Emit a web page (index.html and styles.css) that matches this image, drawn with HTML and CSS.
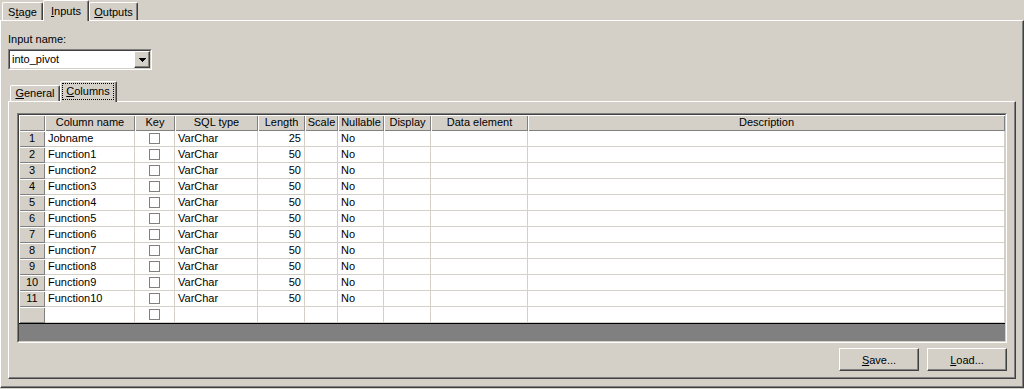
FILE: index.html
```html
<!DOCTYPE html>
<html lang="en">
  <head>
    <meta charset="UTF-8" />
    <meta name="viewport" content="width=device-width, initial-scale=1.0" />
    <title>Stage Properties</title>
    <link rel="stylesheet" href="styles.css">
  </head>
  <body>
    <div class="tabs outer-tabs">
      <div class="tab tab-stage">S<u>t</u>age</div>
      <div class="tab tab-active tab-inputs"><u>I</u>nputs</div>
      <div class="tab tab-outputs"><u>O</u>utputs</div>
    </div>

    <div class="panel outer-panel">
      <div class="field-label">Input name:</div>
      <div class="combo">
        <div class="combo-field">
          <div class="combo-text">into_pivot</div>
          <div class="combo-button">
            <svg width="7" height="4" viewBox="0 0 7 4" shape-rendering="crispEdges">
              <rect x="0" y="0" width="7" height="1" fill="#000" />
              <rect x="1" y="1" width="5" height="1" fill="#000" />
              <rect x="2" y="2" width="3" height="1" fill="#000" />
              <rect x="3" y="3" width="1" height="1" fill="#000" />
            </svg>
          </div>
        </div>
      </div>

      <div class="tabs inner-tabs">
        <div class="tab tab-general"><u>G</u>eneral</div>
        <div class="tab tab-active tab-columns"><span class="focus"><u>C</u>olumns</span></div>
      </div>

      <div class="panel inner-panel">
        <div class="grid">
          <div class="grid-inner">
            <div class="row">
              <div class="hd"></div>
              <div class="hd">Column name</div>
              <div class="hd">Key</div>
              <div class="hd">SQL type</div>
              <div class="hd">Length</div>
              <div class="hd">Scale</div>
              <div class="hd">Nullable</div>
              <div class="hd">Display</div>
              <div class="hd">Data element</div>
              <div class="hd">Description</div>
            </div>
            <div class="row">
              <div class="num">1</div><div class="cell">Jobname</div><div class="cell key"><span class="check"></span></div><div class="cell">VarChar</div><div class="cell len">25</div><div class="cell"></div><div class="cell">No</div><div class="cell"></div><div class="cell"></div><div class="cell"></div>
            </div>
            <div class="row">
              <div class="num">2</div><div class="cell">Function1</div><div class="cell key"><span class="check"></span></div><div class="cell">VarChar</div><div class="cell len">50</div><div class="cell"></div><div class="cell">No</div><div class="cell"></div><div class="cell"></div><div class="cell"></div>
            </div>
            <div class="row">
              <div class="num">3</div><div class="cell">Function2</div><div class="cell key"><span class="check"></span></div><div class="cell">VarChar</div><div class="cell len">50</div><div class="cell"></div><div class="cell">No</div><div class="cell"></div><div class="cell"></div><div class="cell"></div>
            </div>
            <div class="row">
              <div class="num">4</div><div class="cell">Function3</div><div class="cell key"><span class="check"></span></div><div class="cell">VarChar</div><div class="cell len">50</div><div class="cell"></div><div class="cell">No</div><div class="cell"></div><div class="cell"></div><div class="cell"></div>
            </div>
            <div class="row">
              <div class="num">5</div><div class="cell">Function4</div><div class="cell key"><span class="check"></span></div><div class="cell">VarChar</div><div class="cell len">50</div><div class="cell"></div><div class="cell">No</div><div class="cell"></div><div class="cell"></div><div class="cell"></div>
            </div>
            <div class="row">
              <div class="num">6</div><div class="cell">Function5</div><div class="cell key"><span class="check"></span></div><div class="cell">VarChar</div><div class="cell len">50</div><div class="cell"></div><div class="cell">No</div><div class="cell"></div><div class="cell"></div><div class="cell"></div>
            </div>
            <div class="row">
              <div class="num">7</div><div class="cell">Function6</div><div class="cell key"><span class="check"></span></div><div class="cell">VarChar</div><div class="cell len">50</div><div class="cell"></div><div class="cell">No</div><div class="cell"></div><div class="cell"></div><div class="cell"></div>
            </div>
            <div class="row">
              <div class="num">8</div><div class="cell">Function7</div><div class="cell key"><span class="check"></span></div><div class="cell">VarChar</div><div class="cell len">50</div><div class="cell"></div><div class="cell">No</div><div class="cell"></div><div class="cell"></div><div class="cell"></div>
            </div>
            <div class="row">
              <div class="num">9</div><div class="cell">Function8</div><div class="cell key"><span class="check"></span></div><div class="cell">VarChar</div><div class="cell len">50</div><div class="cell"></div><div class="cell">No</div><div class="cell"></div><div class="cell"></div><div class="cell"></div>
            </div>
            <div class="row">
              <div class="num">10</div><div class="cell">Function9</div><div class="cell key"><span class="check"></span></div><div class="cell">VarChar</div><div class="cell len">50</div><div class="cell"></div><div class="cell">No</div><div class="cell"></div><div class="cell"></div><div class="cell"></div>
            </div>
            <div class="row">
              <div class="num">11</div><div class="cell">Function10</div><div class="cell key"><span class="check"></span></div><div class="cell">VarChar</div><div class="cell len">50</div><div class="cell"></div><div class="cell">No</div><div class="cell"></div><div class="cell"></div><div class="cell"></div>
            </div>
            <div class="row">
              <div class="num"></div><div class="cell"></div><div class="cell key"><span class="check"></span></div><div class="cell"></div><div class="cell"></div><div class="cell"></div><div class="cell"></div><div class="cell"></div><div class="cell"></div><div class="cell"></div>
            </div>
            <div class="grid-fill"></div>
          </div>
        </div>

        <div class="buttons">
          <button class="btn"><u>S</u>ave...</button>
          <button class="btn"><u>L</u>oad...</button>
        </div>
      </div>
    </div>
  </body>
</html>
```

FILE: styles.css
```css
* {
  box-sizing: border-box;
}

body {
  margin: 0;
  width: 1024px;
  height: 389px;
  overflow: hidden;
  background-color: #d4d0c8;
  font-family: "Liberation Sans", Arial, sans-serif;
  font-size: 11px;
  color: #000;
}

u {
  text-decoration: underline;
  text-underline-offset: 1px;
}

/* tab strips */

.tabs {
  display: flex;
  align-items: flex-end;
  padding-left: 2px;
}

.outer-tabs {
  height: 20px;
}

.inner-tabs {
  height: 21px;
  margin-top: 10px;
}

.tab {
  height: 18px;
  padding-top: 2px;
  border-top: 1px solid #fff;
  border-left: 1px solid #fff;
  border-right: 1px solid #404040;
  border-radius: 2px 2px 0 0;
  box-shadow: inset -1px 0 #808080;
  text-align: center;
  line-height: 14px;
}

.tab-active {
  position: relative;
  z-index: 1;
  height: 21px;
  margin-bottom: -1px;
  background-color: #d4d0c8;
  line-height: 16px;
}

.tab-stage {
  width: 41px;
}

.tab-inputs {
  width: 46px;
}

.tab-outputs {
  width: 49px;
}

.tab-general {
  width: 50px;
  height: 16px;
  padding-top: 1px;
  line-height: 13px;
}

.tab-columns {
  width: 57px;
  padding: 1px 2px 0 1px;
}

.focus {
  display: block;
  height: 17px;
  border: 1px dotted #000;
  line-height: 14px;
}

/* panels */

.panel {
  border-top: 1px solid #fff;
  border-left: 1px solid #fff;
  border-right: 1px solid #404040;
  border-bottom: 1px solid #404040;
  box-shadow: inset -1px -1px #808080;
}

.outer-panel {
  height: 368px;
  padding: 12px 0 0 7px;
}

.inner-panel {
  width: 1008px;
  height: 278px;
  padding: 11px 0 0 8px;
}

.field-label {
  line-height: 13px;
  margin-bottom: 3px;
}

/* combo box */

.combo {
  width: 144px;
  height: 21px;
  border: 1px solid;
  border-color: #808080 #fff #fff #808080;
}

.combo-field {
  display: flex;
  height: 100%;
  border: 1px solid;
  border-color: #404040 #d4d0c8 #d4d0c8 #404040;
  background-color: #fff;
}

.combo-text {
  flex: 1;
  padding-left: 2px;
  line-height: 16px;
}

.combo-button {
  display: flex;
  align-items: center;
  justify-content: center;
  width: 16px;
  height: 17px;
  background-color: #d4d0c8;
  border: 1px solid;
  border-color: #fff #404040 #404040 #fff;
  box-shadow: inset -1px -1px #808080;
}

/* columns grid */

.grid {
  width: 990px;
  height: 230px;
  border: 1px solid;
  border-color: #808080 #fff #fff #808080;
}

.grid-inner {
  display: flex;
  flex-direction: column;
  height: 100%;
  border: 1px solid;
  border-color: #404040 #d4d0c8 #d4d0c8 #404040;
  background-color: #fff;
}

.row {
  display: grid;
  grid-template-columns: 26px 90px 40px 83px 47px 33px 46px 47px 97px 477px;
  height: 16px;
}

.hd,
.num {
  background-color: #d4d0c8;
  box-shadow: inset 1px 1px #fff, inset -1px -1px #808080;
  text-align: center;
  line-height: 15px;
  white-space: nowrap;
  overflow: hidden;
}

.cell {
  border-right: 1px solid #d4d0c8;
  border-bottom: 1px solid #d4d0c8;
  padding: 0 3px;
  line-height: 15px;
  white-space: nowrap;
  overflow: hidden;
}

.len {
  text-align: right;
}

.key {
  padding-top: 2px;
}

.check {
  display: block;
  width: 11px;
  height: 11px;
  margin: 0 auto;
  border: 1px solid #808080;
  background-color: #fff;
}

.grid-fill {
  flex: 1;
  background-color: #808080;
  border-top: 1px solid #000;
}

/* buttons */

.buttons {
  display: flex;
  justify-content: flex-end;
  gap: 8px;
  width: 990px;
  margin-top: 5px;
}

.btn {
  width: 80px;
  height: 23px;
  padding: 0;
  background-color: #d4d0c8;
  border: 1px solid;
  border-color: #fff #404040 #404040 #fff;
  box-shadow: inset -1px -1px #808080;
  font-family: inherit;
  font-size: 11px;
  color: #000;
}
```
